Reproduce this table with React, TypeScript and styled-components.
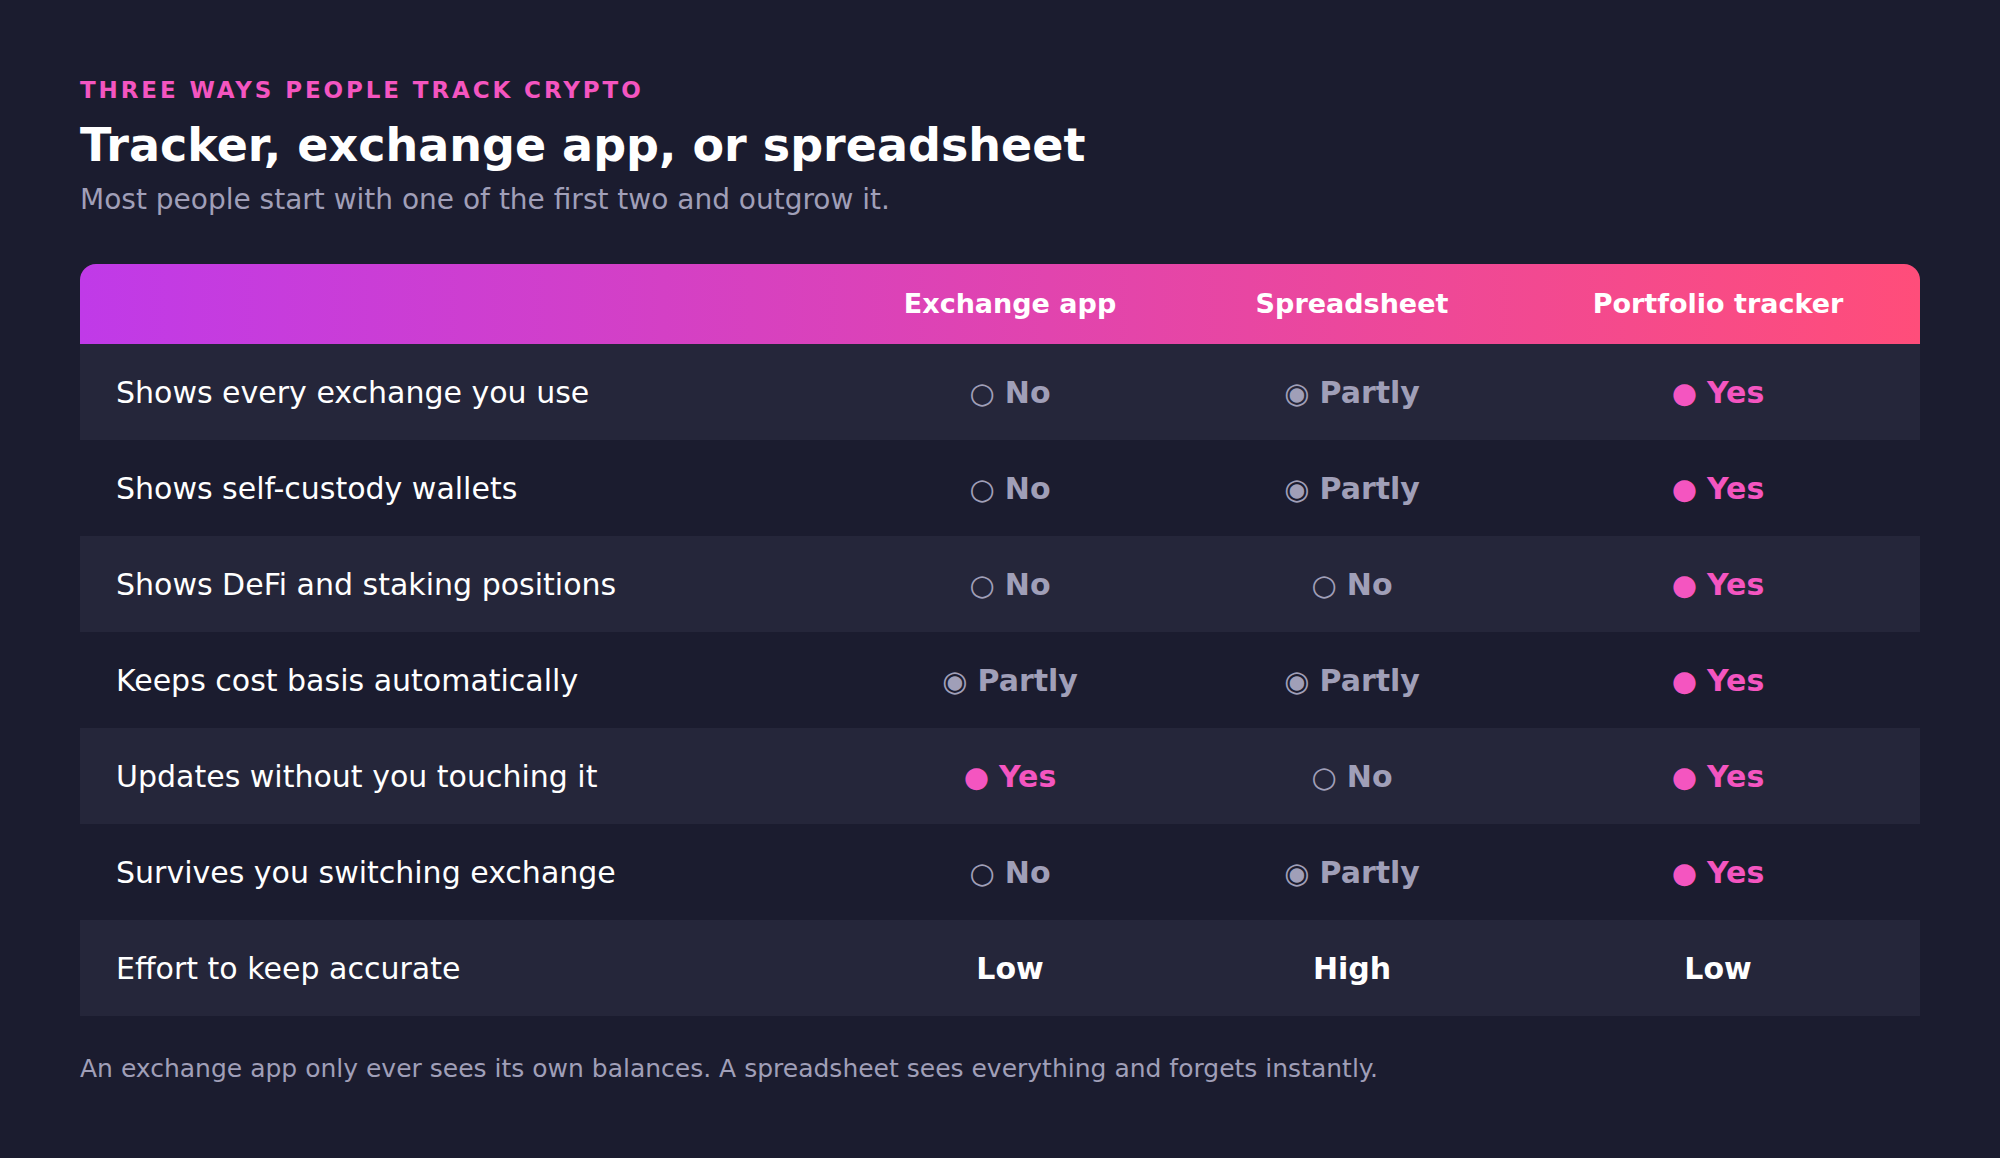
import React from "react";
import styled, { createGlobalStyle } from "styled-components";

const GlobalStyle = createGlobalStyle`
  html, body {
    margin: 0;
    padding: 0;
    background: #1b1c2f;
  }
  body {
    font-family: "DejaVu Sans", "Liberation Sans", sans-serif;
    color: #ffffff;
  }
`;

const Page = styled.main`
  box-sizing: border-box;
  width: 2000px;
  min-height: 1158px;
  padding: 77px 80px 0 80px;
  background: #1b1c2f;
`;

const Eyebrow = styled.div`
  font-size: 23px;
  line-height: 27px;
  font-weight: 700;
  letter-spacing: 2.9px;
  color: #f455c0;
  text-transform: uppercase;
`;

const Title = styled.h1`
  margin: 14px 0 0 0;
  font-size: 46px;
  line-height: 54px;
  font-weight: 700;
  color: #ffffff;
`;

const Subtitle = styled.p`
  margin: 11px 0 0 0;
  font-size: 28px;
  line-height: 34px;
  color: #a09fb8;
`;

const Table = styled.div`
  margin-top: 47px;
  width: 1840px;
  display: flex;
  flex-direction: column;
`;

const columns = "752px 356px 328px 404px";

const HeaderRow = styled.div`
  display: grid;
  grid-template-columns: ${columns};
  height: 80px;
  align-items: center;
  border-radius: 16px 16px 0 0;
  background: linear-gradient(90deg, #c03ae8 0%, #ff4d7a 100%);
`;

const HeaderCell = styled.div`
  text-align: center;
  font-size: 27px;
  line-height: 32px;
  font-weight: 700;
  color: #ffffff;
`;

const Row = styled.div<{ $striped: boolean }>`
  box-sizing: border-box;
  display: grid;
  grid-template-columns: ${columns};
  height: 96px;
  padding-top: 2px;
  align-items: center;
  background: ${(p) => (p.$striped ? "#25263a" : "#1b1c2f")};
`;

const LabelCell = styled.div`
  padding-left: 36px;
  font-size: 30px;
  line-height: 36px;
  color: #ffffff;
`;

type Level = "yes" | "partly" | "no";

const ValueCell = styled.div<{ $level: Level | "text" }>`
  text-align: center;
  font-size: 30px;
  line-height: 36px;
  font-weight: 700;
  color: ${(p) =>
    p.$level === "yes" ? "#f455c0" : p.$level === "text" ? "#ffffff" : "#a09fb8"};
`;

const Mark = styled.span`
  font-weight: 400;
  font-size: 29px;
  margin-right: 10px;
`;

const Note = styled.p`
  margin: 38px 0 0 0;
  font-size: 25px;
  line-height: 30px;
  color: #a09fb8;
`;

const glyph: Record<Level, string> = {
  yes: "\u25CF",
  partly: "\u25C9",
  no: "\u25CB",
};

const label: Record<Level, string> = {
  yes: "Yes",
  partly: "Partly",
  no: "No",
};

type Cell = Level | { text: string };

const rows: { name: string; cells: Cell[] }[] = [
  { name: "Shows every exchange you use", cells: ["no", "partly", "yes"] },
  { name: "Shows self-custody wallets", cells: ["no", "partly", "yes"] },
  { name: "Shows DeFi and staking positions", cells: ["no", "no", "yes"] },
  { name: "Keeps cost basis automatically", cells: ["partly", "partly", "yes"] },
  { name: "Updates without you touching it", cells: ["yes", "no", "yes"] },
  { name: "Survives you switching exchange", cells: ["no", "partly", "yes"] },
  {
    name: "Effort to keep accurate",
    cells: [{ text: "Low" }, { text: "High" }, { text: "Low" }],
  },
];

function Value({ cell }: { cell: Cell }) {
  if (typeof cell === "object") {
    return <ValueCell $level="text">{cell.text}</ValueCell>;
  }
  return (
    <ValueCell $level={cell}>
      <Mark>{glyph[cell]}</Mark>
      {label[cell]}
    </ValueCell>
  );
}

export default function App() {
  return (
    <>
      <GlobalStyle />
      <Page>
        <Eyebrow>Three ways people track crypto</Eyebrow>
        <Title>Tracker, exchange app, or spreadsheet</Title>
        <Subtitle>Most people start with one of the first two and outgrow it.</Subtitle>
        <Table>
          <HeaderRow>
            <div />
            <HeaderCell>Exchange app</HeaderCell>
            <HeaderCell>Spreadsheet</HeaderCell>
            <HeaderCell>Portfolio tracker</HeaderCell>
          </HeaderRow>
          {rows.map((r, i) => (
            <Row key={r.name} $striped={i % 2 === 0}>
              <LabelCell>{r.name}</LabelCell>
              {r.cells.map((c, j) => (
                <Value key={j} cell={c} />
              ))}
            </Row>
          ))}
        </Table>
        <Note>
          An exchange app only ever sees its own balances. A spreadsheet sees
          everything and forgets instantly.
        </Note>
      </Page>
    </>
  );
}
